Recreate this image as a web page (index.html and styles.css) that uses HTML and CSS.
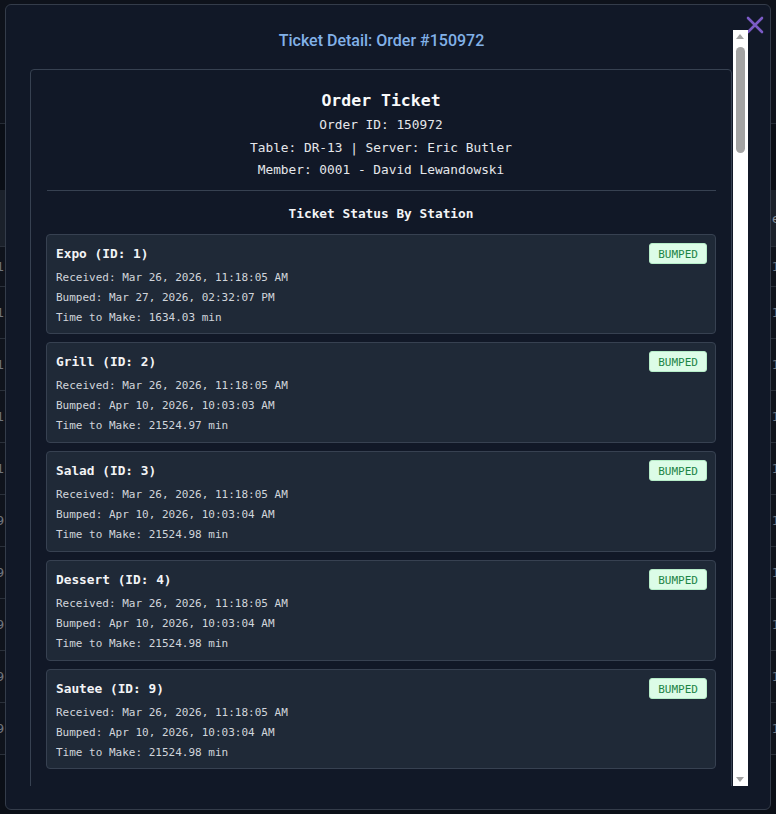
FILE: index.html
```html
<!DOCTYPE html>
<html>
<head>
    <title>Ticket Detail</title>
    <link rel="stylesheet" href="styles.css">
</head>
<body>
    <div class="page">
        <div class="page-top"></div>
        <div class="page-band"></div>
        <div class="table-head"><span class="cell-l"></span><span class="cell-r">e</span></div>
        <div class="table-row first"><span class="cell-l">1</span><span class="cell-r">1</span></div>
        <div class="table-row"><span class="cell-l">1</span><span class="cell-r">1</span></div>
        <div class="table-row"><span class="cell-l">1</span><span class="cell-r">1</span></div>
        <div class="table-row"><span class="cell-l">1</span><span class="cell-r">1</span></div>
        <div class="table-row"><span class="cell-l">1</span><span class="cell-r">1</span></div>
        <div class="table-row"><span class="cell-l">9</span><span class="cell-r">1</span></div>
        <div class="table-row"><span class="cell-l">9</span><span class="cell-r">1</span></div>
        <div class="table-row"><span class="cell-l">9</span><span class="cell-r">1</span></div>
        <div class="table-row"><span class="cell-l">9</span><span class="cell-r">1</span></div>
        <div class="table-row"><span class="cell-l">9</span><span class="cell-r">1</span></div>
    </div>

    <div class="modal">
        <button class="close" type="button" aria-label="Close">
            <svg width="18" height="18" viewBox="0 0 18 18">
                <path d="M2 2 L16 16 M16 2 L2 16" stroke="#7b5bc6" stroke-width="2.6" stroke-linecap="round"/>
            </svg>
        </button>
        <div class="modal-body">
            <div class="scroll-area">
                <h2 class="detail-title">Ticket Detail: Order #150972</h2>

                <div class="ticket">
                    <div class="ticket-head">
                        <h3>Order Ticket</h3>
                        <p>Order ID: 150972</p>
                        <p>Table: DR-13 | Server: Eric Butler</p>
                        <p>Member: 0001 - David Lewandowski</p>
                    </div>
                    <hr>
                    <h4 class="section-title">Ticket Status By Station</h4>

                    <div class="station">
                        <div class="station-top">
                            <span class="station-name">Expo (ID: 1)</span>
                            <span class="badge">BUMPED</span>
                        </div>
                        <div class="line">Received: Mar 26, 2026, 11:18:05 AM</div>
                        <div class="line">Bumped: Mar 27, 2026, 02:32:07 PM</div>
                        <div class="line">Time to Make: 1634.03 min</div>
                    </div>

                    <div class="station">
                        <div class="station-top">
                            <span class="station-name">Grill (ID: 2)</span>
                            <span class="badge">BUMPED</span>
                        </div>
                        <div class="line">Received: Mar 26, 2026, 11:18:05 AM</div>
                        <div class="line">Bumped: Apr 10, 2026, 10:03:03 AM</div>
                        <div class="line">Time to Make: 21524.97 min</div>
                    </div>

                    <div class="station">
                        <div class="station-top">
                            <span class="station-name">Salad (ID: 3)</span>
                            <span class="badge">BUMPED</span>
                        </div>
                        <div class="line">Received: Mar 26, 2026, 11:18:05 AM</div>
                        <div class="line">Bumped: Apr 10, 2026, 10:03:04 AM</div>
                        <div class="line">Time to Make: 21524.98 min</div>
                    </div>

                    <div class="station">
                        <div class="station-top">
                            <span class="station-name">Dessert (ID: 4)</span>
                            <span class="badge">BUMPED</span>
                        </div>
                        <div class="line">Received: Mar 26, 2026, 11:18:05 AM</div>
                        <div class="line">Bumped: Apr 10, 2026, 10:03:04 AM</div>
                        <div class="line">Time to Make: 21524.98 min</div>
                    </div>

                    <div class="station">
                        <div class="station-top">
                            <span class="station-name">Sautee (ID: 9)</span>
                            <span class="badge">BUMPED</span>
                        </div>
                        <div class="line">Received: Mar 26, 2026, 11:18:05 AM</div>
                        <div class="line">Bumped: Apr 10, 2026, 10:03:04 AM</div>
                        <div class="line">Time to Make: 21524.98 min</div>
                    </div>

                    <h4 class="section-title more">Order Items</h4>
                </div>
            </div>
            <div class="scrollbar">
                <span class="arrow up"></span>
                <span class="thumb"></span>
                <span class="arrow down"></span>
            </div>
        </div>
    </div>
</body>
</html>
```

FILE: styles.css
```css
html, body {
    margin: 0;
    padding: 0;
}

body {
    width: 776px;
    height: 814px;
    overflow: hidden;
    background: #0b0f17;
    font-family: "DejaVu Sans Mono", monospace;
    color: #e5e7eb;
}

/* page behind the modal (already dimmed) */
.page {
    height: 814px;
}

.page-top {
    height: 123px;
    background: #0e121b;
    border-bottom: 1px solid #252b35;
}

.page-band {
    height: 66px;
    background: #0a0e16;
}

.table-head {
    height: 56px;
    background: #1b212b;
    display: flex;
    justify-content: space-between;
    align-items: center;
    border-bottom: 1px solid #2a303a;
    font-family: "DejaVu Sans", sans-serif;
    font-size: 13px;
    color: #8a9099;
}

.table-row {
    height: 51px;
    display: flex;
    justify-content: space-between;
    align-items: center;
    background: #0f131c;
    border-bottom: 1px solid #2a303a;
    font-family: "DejaVu Sans", sans-serif;
    font-size: 13px;
    color: #6f757e;
}

.table-row.first {
    height: 39px;
}

.cell-l {
    margin-left: -4px;
}

.cell-r {
    margin-right: -4px;
}

/* modal */
.modal {
    position: fixed;
    left: 5px;
    top: 4px;
    box-sizing: border-box;
    width: 766px;
    height: 806px;
    padding: 25px 22px 23px 24px;
    background: #111827;
    border: 1px solid #343c4a;
    border-radius: 6px;
}

.close {
    position: absolute;
    top: 11px;
    right: 6px;
    padding: 0;
    border: none;
    background: none;
    cursor: pointer;
}

.modal-body {
    display: flex;
    height: 100%;
}

.scroll-area {
    flex: 1;
    overflow: hidden;
}

.detail-title {
    margin: 0 0 17px;
    text-align: center;
    font-family: Roboto, sans-serif;
    font-size: 16px;
    font-weight: 500;
    line-height: 22px;
    color: #82b1e8;
}

.ticket {
    margin-right: 1px;
    padding: 15px;
    border: 1px solid #374151;
    border-radius: 4px;
}

.ticket-head {
    text-align: center;
}

.ticket-head h3 {
    margin: 3px 0 0;
    font-size: 16.5px;
    line-height: 26px;
    color: #f9fafb;
}

.ticket-head p {
    margin: 0;
    font-size: 12.8px;
    line-height: 22.5px;
    color: #e5e7eb;
}

hr {
    margin: 8px 0 0 1px;
    border: none;
    border-top: 1px solid #374151;
}

.section-title {
    margin: 12px 0 9px;
    text-align: center;
    font-size: 12.8px;
    line-height: 22px;
    color: #f3f4f6;
}

.section-title.more {
    margin-top: 30px;
}

.station {
    margin-bottom: 8px;
    padding: 8px 8px 5.75px 9px;
    background: #1f2937;
    border: 1px solid #374151;
    border-radius: 4px;
}

.station-top {
    display: flex;
    justify-content: space-between;
    align-items: center;
    margin-bottom: 4px;
}

.station-name {
    font-size: 12.8px;
    font-weight: bold;
    color: #f3f4f6;
}

.badge {
    height: 21px;
    line-height: 21px;
    padding: 0 8px;
    box-sizing: border-box;
    font-size: 11px;
    color: #1c8446;
    background: #dcfce7;
    border: 1px solid #b6ecc8;
    border-radius: 3px;
}

.line {
    font-size: 11px;
    line-height: 20px;
    color: #d1d5db;
}

/* fake light scrollbar */
.scrollbar {
    position: relative;
    width: 15px;
    background: #ffffff;
}

.thumb {
    position: absolute;
    left: 3px;
    top: 17px;
    width: 9px;
    height: 106px;
    border-radius: 5px;
    background: #a3a3a3;
}

.arrow {
    position: absolute;
    left: 3px;
    width: 0;
    height: 0;
    border-left: 4.5px solid transparent;
    border-right: 4.5px solid transparent;
}

.arrow.up {
    top: 4px;
    border-bottom: 5px solid #a3a3a3;
}

.arrow.down {
    bottom: 4px;
    border-top: 5px solid #a3a3a3;
}
```
